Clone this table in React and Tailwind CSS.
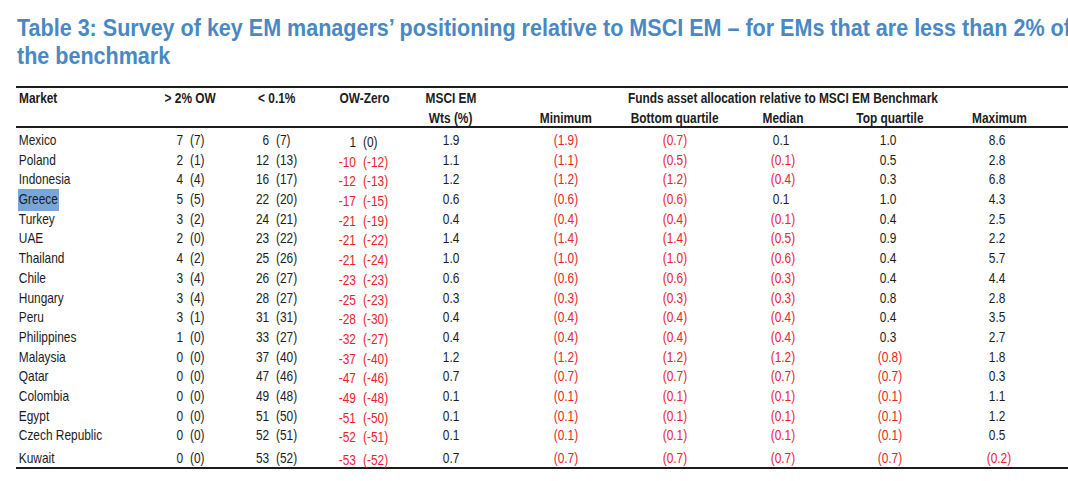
import React from 'react';

const rows = [
  ['Mexico', ['7', '(7)'], ['6', '(7)'], ['1', '(0)'], '1.9', ['(1.9)', '(0.7)', '0.1', '1.0', '8.6']],
  ['Poland', ['2', '(1)'], ['12', '(13)'], ['-10', '(-12)'], '1.1', ['(1.1)', '(0.5)', '(0.1)', '0.5', '2.8']],
  ['Indonesia', ['4', '(4)'], ['16', '(17)'], ['-12', '(-13)'], '1.2', ['(1.2)', '(1.2)', '(0.4)', '0.3', '6.8']],
  ['Greece', ['5', '(5)'], ['22', '(20)'], ['-17', '(-15)'], '0.6', ['(0.6)', '(0.6)', '0.1', '1.0', '4.3']],
  ['Turkey', ['3', '(2)'], ['24', '(21)'], ['-21', '(-19)'], '0.4', ['(0.4)', '(0.4)', '(0.1)', '0.4', '2.5']],
  ['UAE', ['2', '(0)'], ['23', '(22)'], ['-21', '(-22)'], '1.4', ['(1.4)', '(1.4)', '(0.5)', '0.9', '2.2']],
  ['Thailand', ['4', '(2)'], ['25', '(26)'], ['-21', '(-24)'], '1.0', ['(1.0)', '(1.0)', '(0.6)', '0.4', '5.7']],
  ['Chile', ['3', '(4)'], ['26', '(27)'], ['-23', '(-23)'], '0.6', ['(0.6)', '(0.6)', '(0.3)', '0.4', '4.4']],
  ['Hungary', ['3', '(4)'], ['28', '(27)'], ['-25', '(-23)'], '0.3', ['(0.3)', '(0.3)', '(0.3)', '0.8', '2.8']],
  ['Peru', ['3', '(1)'], ['31', '(31)'], ['-28', '(-30)'], '0.4', ['(0.4)', '(0.4)', '(0.4)', '0.4', '3.5']],
  ['Philippines', ['1', '(0)'], ['33', '(27)'], ['-32', '(-27)'], '0.4', ['(0.4)', '(0.4)', '(0.4)', '0.3', '2.7']],
  ['Malaysia', ['0', '(0)'], ['37', '(40)'], ['-37', '(-40)'], '1.2', ['(1.2)', '(1.2)', '(1.2)', '(0.8)', '1.8']],
  ['Qatar', ['0', '(0)'], ['47', '(46)'], ['-47', '(-46)'], '0.7', ['(0.7)', '(0.7)', '(0.7)', '(0.7)', '0.3']],
  ['Colombia', ['0', '(0)'], ['49', '(48)'], ['-49', '(-48)'], '0.1', ['(0.1)', '(0.1)', '(0.1)', '(0.1)', '1.1']],
  ['Egypt', ['0', '(0)'], ['51', '(50)'], ['-51', '(-50)'], '0.1', ['(0.1)', '(0.1)', '(0.1)', '(0.1)', '1.2']],
  ['Czech Republic', ['0', '(0)'], ['52', '(51)'], ['-52', '(-51)'], '0.1', ['(0.1)', '(0.1)', '(0.1)', '(0.1)', '0.5']],
  ['Kuwait', ['0', '(0)'], ['53', '(52)'], ['-53', '(-52)'], '0.7', ['(0.7)', '(0.7)', '(0.7)', '(0.7)', '(0.2)']],
];

const grid = 'grid grid-cols-[134px_80px_94px_80px_94px_136px_82px_134px_80px_138px]';

// narrow text: Arial Narrow isn't installed, so squeeze Liberation Sans
const N = ({ children, o = 'origin-center', className = '' }) => (
  <span className={`inline-block whitespace-nowrap scale-x-[0.82] ${o} ${className}`}>{children}</span>
);

// paired "n (n)" cell: number right-aligned, bracket left-aligned after it
const Pair = ({ value, numW, red, className = '' }) => (
  <div className={`flex items-center ${red ? 'text-[#e8232b]' : ''} ${className}`}>
    <span className={`${numW} flex justify-end`}>
      <N o="origin-right">{value[0]}</N>
    </span>
    <span className="ml-[7px] flex">
      <N o="origin-left">{value[1]}</N>
    </span>
  </div>
);

const Center = ({ children, className = '' }) => (
  <div className={`flex items-center justify-center whitespace-nowrap ${className}`}>
    <N>{children}</N>
  </div>
);

export default function App() {
  return (
    <div className="w-[1068px] h-[481px] overflow-hidden bg-white text-[#1c1c1c] font-['Liberation_Sans',Arial,sans-serif]">
      <h1 className="pl-[17px] pt-[14px] text-[24.5px] leading-[28px] font-bold text-[#4a88c4] whitespace-nowrap">
        <span className="inline-block scale-x-[0.879] origin-left">
          Table 3: Survey of key EM managers’ positioning relative to MSCI EM – for EMs that are less than 2% of
          <br />
          the benchmark
        </span>
      </h1>

      <div className="mt-[16px] ml-[16px] w-[1052px] text-[14.5px]">
        {/* header */}
        <div className="border-t-2 border-b-2 border-[#1c1c1c] font-bold">
          <div className={`${grid} h-[20px] items-center`}>
            <div className="pl-[3px] flex">
              <N o="origin-left">Market</N>
            </div>
            <Center>&gt; 2% OW</Center>
            <Center>&lt; 0.1%</Center>
            <Center>OW-Zero</Center>
            <Center>MSCI EM</Center>
            <Center className="col-span-5">Funds asset allocation relative to MSCI EM Benchmark</Center>
          </div>
          <div className={`${grid} h-[18px] items-center`}>
            <div />
            <div />
            <div />
            <div />
            <Center>Wts (%)</Center>
            <Center>Minimum</Center>
            <Center>Bottom quartile</Center>
            <Center>Median</Center>
            <Center>Top quartile</Center>
            <Center>Maximum</Center>
          </div>
        </div>

        {/* body */}
        <div className="border-b-2 border-[#1c1c1c]">
          {rows.map((r, i) => (
            <div
              key={r[0]}
              className={`${grid} items-center ${i === 15 ? 'h-[22.5px]' : i === 16 ? 'h-[21px]' : 'h-[19.7px]'}`}
            >
              <div className="pl-[2px] flex">
                <N o="origin-left" className={r[0] === 'Greece' ? 'bg-[#79a6d9] px-[1px]' : 'px-[1px]'}>
                  {r[0]}
                </N>
              </div>
              <Pair value={r[1]} numW="w-[33px]" />
              <Pair value={r[2]} numW="w-[39px]" />
              <Pair value={r[3]} numW="w-[32px]" red={r[3][0].startsWith('-')} className="pt-[4px]" />
              <Center>{r[4]}</Center>
              {r[5].map((v, j) => {
                const neg = v.startsWith('(');
                return (
                  <Center key={j} className={neg ? 'text-[#e8232b]' : 'pr-[4px]'}>
                    {v}
                  </Center>
                );
              })}
            </div>
          ))}
        </div>
      </div>
    </div>
  );
}
